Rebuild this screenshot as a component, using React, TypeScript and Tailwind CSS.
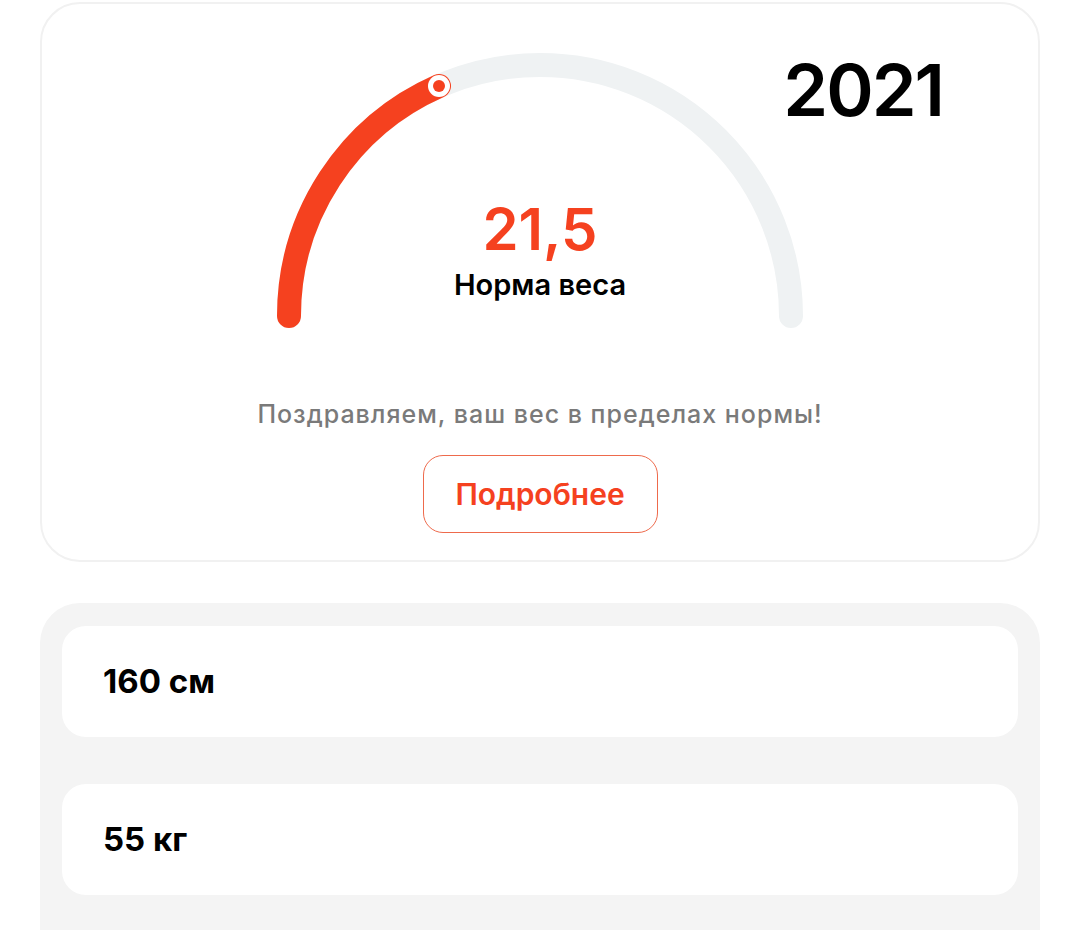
import React from "react";

const RED = "#f5411f";

function Gauge({ value, label }: { value: string; label: string }) {
  // semicircle, center (270, 276), r = 251
  return (
    <div className="relative mx-auto h-[290px] w-[540px]">
      <svg width="540" height="290" viewBox="0 0 540 290" className="block">
        <path
          d="M 19 276 A 251 251 0 0 1 521 276"
          fill="none"
          stroke="#eff2f3"
          strokeWidth="24"
          strokeLinecap="round"
        />
        <path
          d="M 19 276 A 251 251 0 0 1 169 46"
          fill="none"
          stroke={RED}
          strokeWidth="24"
          strokeLinecap="round"
        />
        <circle cx="169" cy="46" r="11" fill="#ffffff" />
        <circle cx="169" cy="46" r="6" fill={RED} />
      </svg>
      <div className="absolute inset-x-0 top-[154px] flex flex-col items-center">
        <span className="text-[58px] font-semibold leading-[70px] text-[#f5411f]">{value}</span>
        <span className="mt-[4px] text-[29px] font-semibold leading-[34px] text-black">{label}</span>
      </div>
    </div>
  );
}

function Row({ text }: { text: string }) {
  return (
    <div className="flex h-[111px] items-center rounded-[24px] bg-white px-[41px]">
      <span className="text-[33px] font-bold leading-none text-black">{text}</span>
    </div>
  );
}

export default function App() {
  return (
    <div
      className="min-h-[930px] bg-white px-10 pt-[2px]"
      style={{ fontFamily: "Inter, 'Noto Sans', sans-serif" }}
    >
      <div className="relative h-[560px] rounded-[40px] border-2 border-[#f1f1f1] bg-white pt-[36px]">
        <span className="absolute right-[95px] top-[50px] text-[72px] font-semibold leading-none tracking-[-2px] text-black">
          2021
        </span>
        <Gauge value="21,5" label="Норма веса" />
        <p className="mt-[68px] text-center text-[25px] font-medium leading-[32px] tracking-[1px] text-[#7a7a7a]">
          Поздравляем, ваш вес в пределах нормы!
        </p>
        <div className="mt-[25px] flex justify-center">
          <button className="h-[78px] w-[235px] rounded-[20px] border border-[#ee6a4c] text-[30px] font-semibold text-[#f5411f]">
            Подробнее
          </button>
        </div>
      </div>
      <div className="mt-[41px] flex flex-col gap-[47px] rounded-t-[40px] bg-[#f4f4f4] px-[22px] pb-10 pt-[23px]">
        <Row text="160 см" />
        <Row text="55 кг" />
      </div>
    </div>
  );
}
